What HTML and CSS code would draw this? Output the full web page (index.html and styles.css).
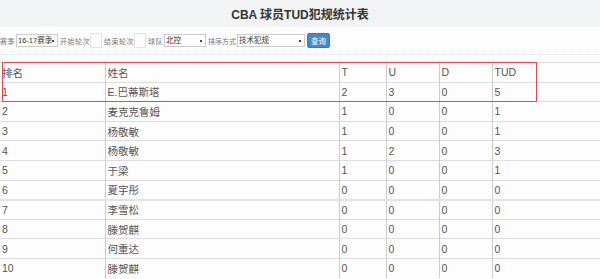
FILE: index.html
```html
<html>
<head>
  <title>CBA 球员TUD犯规统计表</title>
  <link rel="stylesheet" href="styles.css">
</head>
<body>
<header class="title-bar">
  <h1>CBA 球员TUD犯规统计表</h1>
</header>
<form class="filters" action="#" method="get">
  <label>赛季</label>
  <select class="sel sel-season" name="season">
    <option>16-17赛季</option>
  </select>
  <label>开始轮次</label>
  <input class="round" type="text" name="start_round">
  <label>结束轮次</label>
  <input class="round" type="text" name="end_round">
  <label>球队</label>
  <select class="sel sel-team" name="team">
    <option>北控</option>
  </select>
  <label class="tight">排序方式</label>
  <select class="sel sel-order" name="order">
    <option>技术犯规</option>
  </select>
  <button type="submit">查询</button>
</form>
<section class="result">
  <table class="stats">
    <colgroup>
      <col class="c-rank"><col class="c-name"><col class="c-t"><col class="c-u"><col class="c-d"><col class="c-tud">
    </colgroup>
    <thead>
      <tr><th>排名</th><th>姓名</th><th>T</th><th>U</th><th>D</th><th>TUD</th></tr>
    </thead>
    <tbody>
      <tr><td>1</td><td>E.巴蒂斯塔</td><td>2</td><td>3</td><td>0</td><td>5</td></tr>
      <tr><td>2</td><td>麦克克鲁姆</td><td>1</td><td>0</td><td>0</td><td>1</td></tr>
      <tr><td>3</td><td>杨敬敏</td><td>1</td><td>0</td><td>0</td><td>1</td></tr>
      <tr><td>4</td><td>杨敬敏</td><td>1</td><td>2</td><td>0</td><td>3</td></tr>
      <tr><td>5</td><td>于梁</td><td>1</td><td>0</td><td>0</td><td>1</td></tr>
      <tr><td>6</td><td>夏宇彤</td><td>0</td><td>0</td><td>0</td><td>0</td></tr>
      <tr class="split"><td>7</td><td>李雪松</td><td>0</td><td>0</td><td>0</td><td>0</td></tr>
      <tr><td>8</td><td>滕贺麒</td><td>0</td><td>0</td><td>0</td><td>0</td></tr>
      <tr><td>9</td><td>何重达</td><td>0</td><td>0</td><td>0</td><td>0</td></tr>
      <tr><td>10</td><td>滕贺麒</td><td>0</td><td>0</td><td>0</td><td>0</td></tr>
    </tbody>
  </table>
  <div class="mark"></div>
</section>
</body>
</html>
```

FILE: styles.css
```css
body {
  margin: 0;
  background: #fdfdfd;
  color: #555;
  font-family: "Liberation Sans", Arial, "Noto Sans CJK SC", sans-serif;
  overflow: hidden;
}
.title-bar {
  height: 27px;
  background: #f2f3f4;
  display: flex;
  align-items: center;
  justify-content: center;
}
.title-bar h1 {
  margin: 0;
  font-size: 12px;
  font-weight: bold;
  color: #333;
}
.filters {
  height: 27px;
  margin: 0;
  display: flex;
  align-items: center;
  font-size: 7px;
  border-bottom: 1px dotted #e2e2e2;
}
.filters label {
  color: #777;
  letter-spacing: 0.5px;
  margin: 0;
}
.filters label.tight {
  letter-spacing: 0;
}
.filters .sel {
  appearance: none;
  -webkit-appearance: none;
  height: 13px;
  font-size: 7.5px;
  font-family: inherit;
  color: #333;
  background-color: #fff;
  background-image: linear-gradient(#444, #444);
  background-size: 2px 2px;
  background-position: right 3px center;
  background-repeat: no-repeat;
  border: 1px solid #ccc;
  border-radius: 0;
  padding: 0 1px;
  margin: 0 2px 0 1px;
}
.sel-season { width: 42px; }
.sel-team { width: 42px; }
.sel-order { width: 68px; margin-right: 1px; }
.filters .round {
  width: 12px;
  height: 15px;
  border: 1px solid #e4e4e4;
  background: #fff;
  padding: 0;
  margin: 0 2px 0 0;
}
.filters button {
  height: 15px;
  width: 23px;
  padding: 0;
  font-size: 7.5px;
  font-family: inherit;
  color: #fff;
  background: #428bca;
  border: 1px solid #357ebd;
  border-radius: 2px;
}
.result {
  position: relative;
  margin-top: 7px;
}
.stats {
  width: 602px;
  border-collapse: collapse;
  table-layout: fixed;
  font-size: 10.5px;
  color: #555;
}
.c-rank { width: 105px; }
.c-name { width: 234px; }
.c-t { width: 47px; }
.c-u { width: 53px; }
.c-d { width: 53px; }
.c-tud { width: 110px; }
.stats th,
.stats td {
  height: 19.6px;
  box-sizing: border-box;
  padding: 0 2px;
  text-align: left;
  font-weight: normal;
  border-top: 1px solid #ddd;
  border-left: 1px solid #ccc;
}
.stats tr > :first-child {
  border-left: none;
}
.stats tr.split td {
  border-top: 2px solid #e2e2e2;
}
.mark {
  position: absolute;
  left: 2px;
  top: 0;
  width: 533px;
  height: 38px;
  border: 1px solid #e8454f;
  pointer-events: none;
}
```
